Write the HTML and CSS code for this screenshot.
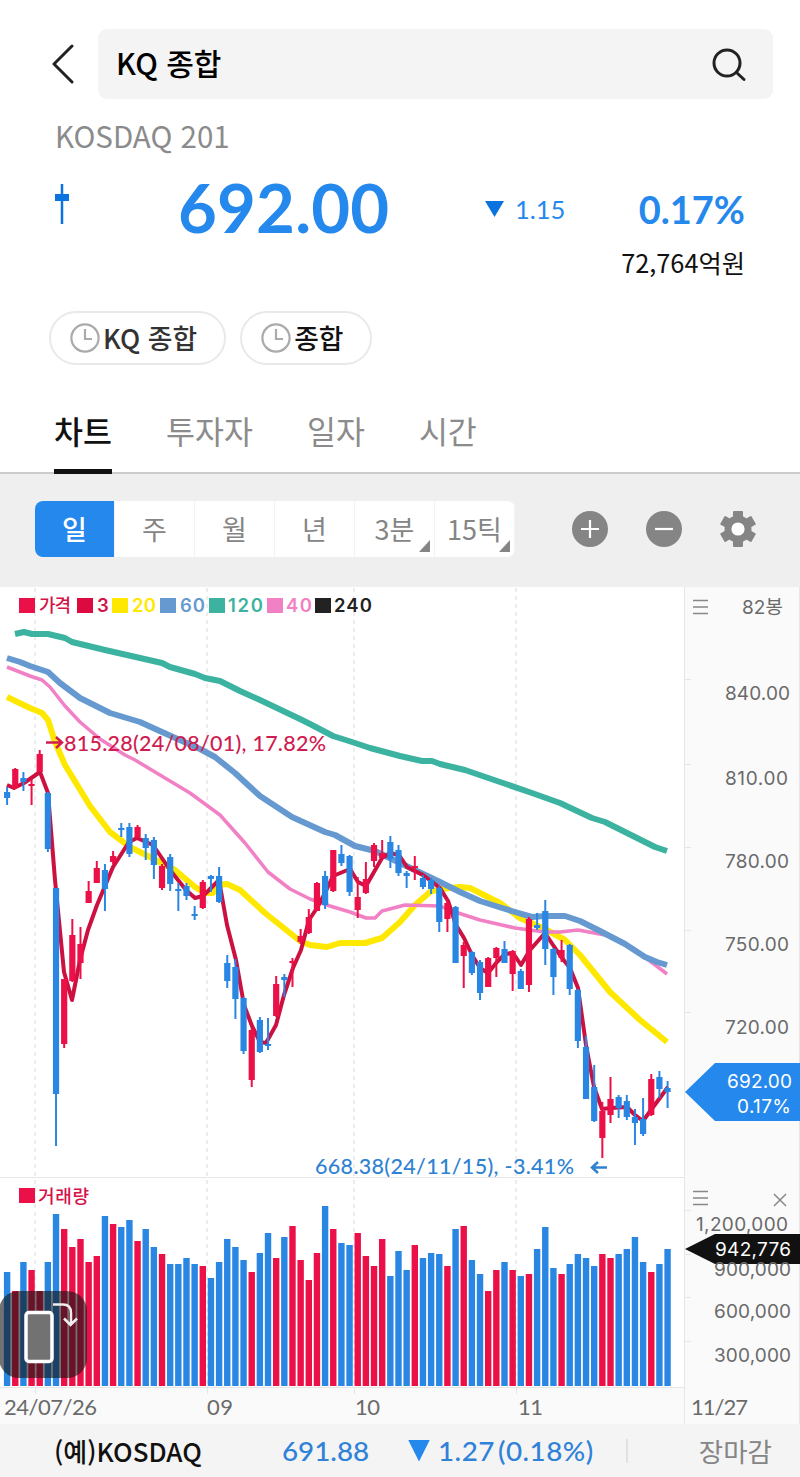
FILE: index.html
```html
<!doctype html>
<html lang="ko">
<head>
    <title>KQ 종합</title>
    <meta charset="utf-8">
    <meta name="viewport" content="width=device-width, initial-scale=1">
    <link rel="stylesheet" href="styles.css">
</head>
<body>
<header class="top-bar">
    <svg class="back" width="24" height="42" viewBox="0 0 24 42"><path d="M22 3 L4 21 L22 39"/></svg>
    <div class="search-box">
        <span>KQ 종합</span>
        <svg width="36" height="36" viewBox="0 0 36 36"><circle cx="16" cy="17" r="13"/><path d="M25.5 26.5 L33 33.500"/></svg>
    </div>
</header>

<section class="quote">
    <div class="code">KOSDAQ 201</div>
    <div class="price-row">
        <svg class="mini-candle" width="14" height="40" viewBox="0 0 14 40"><path d="M7 0V40"/><rect x="0" y="10" width="14" height="7"/></svg>
        <strong class="price">692.00</strong>
        <span class="change"><i class="down"></i>1.15</span>
        <b class="rate">0.17%</b>
    </div>
    <div class="amount">72,764억원</div>
    <div class="chips">
        <div class="chip">
            <svg width="30" height="30" viewBox="0 0 30 30"><circle cx="15" cy="15" r="13.6"/><path d="M15 6V16H22"/></svg>KQ 종합
        </div>
        <div class="chip dark">
            <svg width="30" height="30" viewBox="0 0 30 30"><circle cx="15" cy="15" r="13.6"/><path d="M15 6V16H22"/></svg>종합
        </div>
    </div>
</section>

<nav class="tabs">
    <a class="active">차트</a>
    <a>투자자</a>
    <a>일자</a>
    <a>시간</a>
</nav>

<div class="toolbar">
    <div class="periods">
        <span class="on">일</span>
        <span>주</span>
        <span>월</span>
        <span>년</span>
        <span class="more">3분</span>
        <span class="more">15틱</span>
    </div>
    <div class="tools">
        <svg width="36" height="36" viewBox="0 0 36 36"><circle cx="18" cy="18" r="18"/><path d="M9 18H27M18 9V27"/></svg>
        <svg width="36" height="36" viewBox="0 0 36 36"><circle cx="18" cy="18" r="18"/><path d="M9 18H27"/></svg>
        <svg class="gear" width="36" height="36" viewBox="0 0 36 36">
            <rect x="13" y="0" width="10" height="36" rx="1"/>
            <rect x="13" y="0" width="10" height="36" rx="1" transform="rotate(60 18 18)"/>
            <rect x="13" y="0" width="10" height="36" rx="1" transform="rotate(120 18 18)"/>
            <circle cx="18" cy="18" r="13.5"/>
            <circle class="hole" cx="18" cy="18" r="6.6"/>
        </svg>
    </div>
</div>

<div class="chart">
    <!-- user units are page pixels, so the view starts at the chart's top -->
    <svg width="800" height="837" viewBox="0 587 800 837">
        <rect class="axis-bg" x="684" y="587" width="116" height="837"/>
        <rect class="axis-bg" x="0" y="1387" width="800" height="37"/>
        <path class="dash" d="M35 588V1386M207 588V1386M354 588V1386M516 588V1386"/>
        <path class="rule" d="M0 1177.5H684M0 1387.5H684M684.5 587V1424M799.5 587V1424M35.5 1387v7M207.5 1387v7M354.5 1387v7M516.5 1387v7"/>
        <path class="rule" d="M685 679.5h6M685 764.5h6M685 847.5h6M685 930.5h6M685 1012.5h6M685 1210.5h6M685 1254.5h6M685 1297.5h6M685 1341.5h6"/>

        <g id="lines"></g>
        <g id="candles"></g>
        <g id="volume"></g>

        <g class="legend">
            <rect class="up" x="19" y="598" width="16" height="15"/>
            <text class="kr c-up" x="39" y="612" textLength="32">가격</text>
            <rect class="ma3" x="77" y="598" width="16" height="15"/>
            <text class="c-up" x="97" y="612" textLength="12">3</text>
            <rect class="ma20" x="112" y="598" width="16" height="15"/>
            <text class="ma20" x="132" y="612" textLength="24">20</text>
            <rect class="ma60" x="160" y="598" width="16" height="15"/>
            <text class="ma60" x="180" y="612" textLength="25">60</text>
            <rect class="ma120" x="209" y="598" width="16" height="15"/>
            <text class="ma120" x="228" y="612" textLength="35">120</text>
            <rect class="ma40" x="267" y="598" width="16" height="15"/>
            <text class="ma40" x="286" y="612" textLength="26">40</text>
            <rect x="315" y="598" width="16" height="15" fill="#222"/>
            <text x="334" y="612" textLength="38" fill="#222">240</text>
            <rect class="up" x="19" y="1188" width="16" height="15"/>
            <text class="kr c-up" x="38" y="1203" textLength="51">거래량</text>
        </g>

        <g class="note high">
            <path d="M46 742.500H61M56 737L62 742.500L56 748"/>
            <text x="64" y="751" textLength="262">815.28(24/08/01), 17.82%</text>
        </g>
        <g class="note low">
            <text x="315" y="1174" textLength="259">668.38(24/11/15), -3.41%</text>
            <path d="M607 1167.500H592M598 1162L592 1167.500L598 1173"/>
        </g>

        <path class="icon" d="M693 600.500h15M693 607h15M693 613.500h15M693 1191.500h15M693 1198h15M693 1204.500h15M774 1194l12 12M786 1194l-12 12"/>
        <path d="M685 1092L715 1063H800V1121H715Z" fill="#2588ec"/>
        <path d="M685 1249L715 1234H800V1264H715Z" fill="#111"/>

        <g class="axis">
            <text x="742" y="614" textLength="41">82봉</text>
            <text x="725" y="700" textLength="65">840.00</text>
            <text x="725" y="785" textLength="63">810.00</text>
            <text x="725" y="868" textLength="64">780.00</text>
            <text x="725" y="951" textLength="64">750.00</text>
            <text x="725" y="1034" textLength="64">720.00</text>
            <text class="white" x="727" y="1088" textLength="65">692.00</text>
            <text class="white" x="737" y="1113" textLength="54">0.17%</text>
            <text x="696" y="1231" textLength="92">1,200,000</text>
            <text x="714" y="1276" textLength="77">900,000</text>
            <text class="white" x="715" y="1256" textLength="76">942,776</text>
            <text x="714" y="1318" textLength="77">600,000</text>
            <text x="714" y="1362" textLength="77">300,000</text>
        </g>
        <g class="dates">
            <text x="4" y="1415" textLength="93">24/07/26</text>
            <text x="207" y="1415" textLength="26">09</text>
            <text x="355" y="1415" textLength="25">10</text>
            <text x="518" y="1415" textLength="25">11</text>
            <text x="691" y="1415" textLength="57">11/27</text>
        </g>
    </svg>
    <div class="rotate-btn">
        <svg width="88" height="87" viewBox="0 0 88 87">
            <rect x="27" y="21.500" width="26" height="49" rx="3"/>
            <path d="M54 13.500H64Q72 13.500 72 22V33M65 27.500L71.500 34L78 27.500"/>
        </svg>
    </div>
</div>

<footer class="ticker">
    <span class="name">(예)KOSDAQ</span>
    <span class="num">691.88</span>
    <span class="num diff"><i class="down"></i>1.27<em>(0.18%)</em></span>
    <span class="state">장마감</span>
</footer>
<script src="chart.js"></script>
</body>
</html>
```
FILE: styles.css
```css
* { box-sizing: border-box; }
body {
    margin: 0;
    width: 800px;
    height: 1477px;
    background: #fff;
    color: #111;
    font-family: "Noto Sans CJK KR", sans-serif;
    overflow: hidden;
}
svg { display: block; flex: none; }

.top-bar {
    display: flex;
    align-items: center;
    height: 98px;
    padding: 29px 27px 0 50px;
}
.back { margin-right: 24px; }
.back path, .search-box svg {
    fill: none;
    stroke: #222;
    stroke-width: 3;
    stroke-linecap: round;
    stroke-linejoin: round;
}
.search-box {
    flex: 1;
    display: flex;
    align-items: center;
    justify-content: space-between;
    height: 70px;
    padding: 0 26px 0 18px;
    border-radius: 9px;
    background: #f4f4f4;
    font-size: 30px;
    font-weight: 500;
    line-height: 67px;
    color: #000;
}
.search-box span { height: 70px; }

.quote { height: 302px; padding: 19px 55px 0; }
.code { font-size: 29.500px; line-height: 36px; color: #8b8b8b; }
.price-row {
    display: grid;
    grid-template-columns: 123px 307px 153px 1fr;
    align-items: center;
    height: 88px;
    margin-top: 10px;
    font-family: Lato, sans-serif;
    color: #2588ec;
}
.mini-candle { fill: #0a73e0; stroke: #0a73e0; margin-top: -7px; }
.mini-candle path { stroke-width: 2.5; }
.mini-candle rect { stroke: none; }
.price { font-size: 67px; font-weight: 700; line-height: 88px; letter-spacing: .2px; }
.change { display: flex; align-items: center; font-size: 25.5px; padding-top: 4px; }
.down {
    width: 19px;
    height: 16px;
    margin-right: 11px;
    background: #0a73e0;
    clip-path: polygon(0 0, 100% 0, 50% 100%);
}
.rate { font-size: 38px; text-align: right; padding-top: 4px; }
.amount { font-size: 25.300px; line-height: 30px; text-align: right; margin-top: -4px; }
.chips { display: flex; gap: 14px; margin: 34px 0 0 -6px; }
.chip {
    display: flex;
    align-items: center;
    gap: 3px;
    height: 54px;
    padding: 0 27px 0 19px;
    border: 2px solid #e9e9e9;
    border-radius: 27px;
    font-size: 26.800px;
    font-weight: 500;
    line-height: 48px;
    color: #333;
}
.chip.dark { color: #111; }
.chip svg { fill: none; stroke: #aaa; stroke-width: 2.2; }

.tabs {
    display: flex;
    gap: 54px;
    height: 74px;
    padding-left: 54px;
    border-bottom: 2px solid #ccc;
}
.tabs a {
    height: 74px;
    font-size: 31.500px;
    line-height: 61px;
    color: #8b8b8b;
}
.tabs .active { color: #111; font-weight: 500; border-bottom: 5px solid #111; }

.toolbar {
    display: flex;
    align-items: center;
    height: 113px;
    padding: 0 44px 3px 35px;
    justify-content: space-between;
    background: #efefef;
}
.periods {
    display: flex;
    width: 480px;
    height: 56px;
    border-radius: 8px;
    overflow: hidden;
    background: #fff;
}
.periods span {
    position: relative;
    flex: 1;
    border-right: 1px solid #f3f3f3;
    font-size: 27px;
    line-height: 55px;
    text-align: center;
    color: #858585;
}
.periods .on { background: #2588ec; color: #fff; font-weight: 500; }
.more::after {
    content: "";
    position: absolute;
    right: 4px;
    bottom: 5px;
    border-left: 11px solid transparent;
    border-bottom: 12px solid #858585;
}
.tools { display: flex; gap: 38px; }
.tools svg { fill: #858585; }
.tools path { stroke: #fff; stroke-width: 2.2; }
.tools .hole { fill: #fff; }

.chart { position: relative; height: 837px; }
.axis-bg { fill: #fafafa; }
.dash { stroke: #e2e2e2; stroke-width: 1.2; stroke-dasharray: 4 4; }
.rule { stroke: #e6e6e6; fill: none; }
.up { fill: #ec1048; stroke: #ec1048; }
.dn { fill: #2a86e3; stroke: #2a86e3; }
#volume rect, #candles rect { stroke: none; }
#candles line { stroke-width: 2; }
#lines polyline { fill: none; stroke-linejoin: round; }
.c-up { fill: #d31349; }
.ma3 { fill: #dc0a40; stroke: #cc1040; }
.ma20 { fill: #ffe800; stroke: #ffe800; }
.ma60 { fill: #6599d0; stroke: #6599d0; }
.ma120 { fill: #3cb3a0; stroke: #3cb3a0; }
.ma40 { fill: #f180c4; stroke: #f180c4; }
.legend rect, .legend text { stroke: none; }
.legend text { font: 600 18.500px Inter, sans-serif; }
.legend .kr { font: 500 18px "Noto Sans CJK KR", sans-serif; }
.note text { font: 500 21.500px Lato, sans-serif; }
.note path { fill: none; stroke-width: 2.5; }
.high text { fill: #d01c50; }
.high path { stroke: #d01c50; }
.low text { fill: #2f82d2; }
.low path { stroke: #2f82d2; }
.icon { stroke: #888; stroke-width: 1.5; fill: none; }
.axis text { font: 19px Inter, "Noto Sans CJK KR", sans-serif; fill: #6a6a6a; }
.axis .white { fill: #fff; }
.dates text { font: 22px Lato, sans-serif; fill: #6a6a6a; }

.rotate-btn {
    position: absolute;
    left: -1px;
    top: 704px;
    width: 88px;
    height: 87px;
    border-radius: 20px;
    background: rgba(20, 20, 20, .6);
}
.rotate-btn svg { fill: none; stroke: #fff; stroke-width: 3.5; }
.rotate-btn rect { fill: #727272; }
.rotate-btn path { stroke: #eee; stroke-width: 2.5; }

.ticker {
    display: grid;
    grid-template-columns: 228px 126px 220px 1fr;
    align-items: center;
    height: 53px;
    padding: 0 28px 0 54px;
    background: #f4f4f4;
    font-size: 26px;
    line-height: 53px;
}
.ticker .name { font-weight: 500; }
.ticker .num { font: 500 27.800px Lato, sans-serif; color: #2f82d8; }
.ticker .diff {
    display: flex;
    align-items: center;
    height: 24px;
    border-right: 2px solid #e2e2e2;
    letter-spacing: .5px;
}
.ticker em { font-style: normal; margin-left: 3px; }
.ticker .down { width: 22px; height: 22px; margin-right: 8px; background: #2588ec; }
.state { text-align: right; font-size: 26.500px; color: #858585; }
```
FILE: chart.js
```js
// color, high, body top, body bottom, low (chart y), volume bar top
const bars = [
    ['b',787,792,798,805,1272],['r',768,769,788,789,1291],['b',772,778,782,791,1262],['r',779,784,786,805,1270],
    ['r',750,754,772,772,1291],['b',792,793,849,852,1262],['b',888,888,1094,1146,1214],['r',979,979,1044,1048,1229],
    ['r',919,935,981,982,1247],['r',927,944,963,979,1239],['r',881,891,903,903,1262],['r',861,868,883,883,1256],
    ['b',864,870,889,911,1216],['r',851,856,862,864,1224],['b',823,828,830,837,1227],['b',823,827,854,857,1220],
    ['r',825,827,837,838,1241],['b',834,838,848,860,1229],['b',837,840,865,879,1247],['r',864,866,888,890,1254],
    ['b',854,857,884,891,1264],['b',883,889,891,911,1264],['b',883,886,896,900,1258],['b',906,914,916,920,1264],
    ['r',880,882,908,909,1266],['b',875,876,879,892,1278],['b',867,876,902,903,1262],['b',955,963,981,988,1239],
    ['b',959,967,999,1019,1247],['b',997,998,1051,1054,1260],['r',1028,1030,1080,1087,1272],['b',1017,1020,1052,1053,1253],
    ['b',1018,1044,1046,1050,1233],['r',976,984,1016,1017,1258],['b',974,977,980,997,1237],['r',958,961,963,987,1226],
    ['r',929,936,942,944,1260],['r',909,917,933,934,1280],['r',882,883,911,911,1253],['b',871,876,905,909,1206],
    ['r',850,850,891,892,1229],['b',845,854,863,866,1243],['b',855,856,892,896,1245],['r',877,897,910,918,1233],
    ['r',862,879,893,894,1256],['r',843,845,861,867,1266],['r',840,853,858,858,1239],['b',836,842,859,868,1276],
    ['b',845,850,873,876,1251],['b',871,873,876,888,1270],['r',856,866,868,880,1245],['b',875,878,887,889,1258],
    ['b',878,880,889,894,1253],['b',886,888,922,932,1254],['r',899,903,919,932,1266],['b',906,907,963,963,1229],
    ['r',942,945,956,988,1226],['b',951,952,973,975,1260],['b',960,962,993,1000,1274],['r',957,958,987,987,1291],
    ['r',947,948,958,977,1270],['b',941,949,963,963,1262],['r',950,951,974,991,1270],['b',969,971,989,989,1276],
    ['r',917,919,985,992,1274],['b',913,925,928,930,1249],['b',900,911,949,965,1227],['b',948,949,977,995,1268],
    ['r',940,950,958,962,1274],['b',944,945,989,995,1264],['b',989,990,1041,1048,1254],['b',1036,1047,1099,1099,1258],
    ['b',1065,1087,1121,1122,1266],['r',1102,1111,1138,1158,1254],['r',1077,1099,1115,1123,1258],['b',1095,1097,1108,1118,1254],
    ['b',1095,1101,1117,1120,1249],['b',1109,1117,1123,1145,1237],['b',1098,1119,1134,1136,1262],['r',1074,1079,1115,1116,1272],
    ['b',1071,1077,1089,1098,1264],['b',1081,1088,1092,1108,1249]
];

const averages = [
    ['ma120', 6, '15,634 24,632 32,634 48,634 65,638 72,642 105,650 162,663 170,667 195,674 205,678 220,681 240,691 260,700 300,719 310,724 333,736 352,742 370,748 400,756 422,761 432,761 440,764 465,770 500,782 532,793 560,803 592,818 605,822 655,847 667,851'],
    ['ma20', 6, '7,697 30,708 42,713 48,720 55,742 65,765 90,806 110,832 130,847 150,857 175,870 195,887 205,893 213,893 218,885 227,884 240,890 265,913 300,941 310,945 327,947 340,943 365,943 382,938 400,922 415,905 430,892 440,889 460,887 470,888 500,903 520,918 545,929 565,940 580,955 610,992 640,1020 667,1042'],
    ['ma40', 3.5, '7,667 30,676 42,680 50,687 65,706 80,722 100,739 125,755 135,760 160,775 190,793 220,815 245,843 268,872 290,889 310,899 330,906 350,912 366,918 375,918 382,911 405,905 440,906 452,911 480,920 515,928 545,932 560,932 578,930 605,935 630,947 650,961 667,974'],
    ['ma60', 6, '7,658 20,662 30,666 48,672 60,683 80,698 110,713 140,722 162,732 200,749 215,757 235,773 260,796 292,817 325,832 335,835 355,846 375,851 400,863 440,882 460,892 480,901 502,908 515,912 532,917 545,916 565,916 580,921 600,931 625,944 645,957 657,962 667,965'],
    ['ma3', 4, '7,785 14,788 24,783 40,772 48,793 55,880 64,972 72,1000 80,960 88,930 97,905 113,867 129,842 137,838 153,845 170,870 186,890 195,898 203,896 219,880 227,925 236,960 244,1005 252,1026 260,1042 266,1043 276,1025 284,995 293,968 301,950 309,920 317,908 325,893 333,876 350,869 358,882 366,886 374,872 382,858 390,853 399,855 407,867 423,875 440,888 448,901 456,925 464,938 472,955 480,968 488,973 497,962 505,954 513,953 521,965 530,950 545,933 553,945 562,958 570,968 578,988 586,1045 594,1087 602,1109 611,1108 627,1107 635,1115 643,1121 651,1110 668,1087']
];

const step = 8.154;
let candles = '';
let volume = '';

bars.forEach(([color, high, top, bottom, low, vol], i) => {
    const x = 7.1 + i * step;
    const cls = color === 'r' ? 'up' : 'dn';
    candles += `<g class="${cls}"><line x1="${x}" x2="${x}" y1="${high}" y2="${low}"/>` +
        `<rect x="${x - 3.1}" y="${top}" width="6.2" height="${bottom - top}"/></g>`;
    volume += `<rect class="${cls}" x="${x - 3.2}" y="${vol}" width="6.4" height="${1386 - vol}"/>`;
});

document.getElementById('candles').innerHTML = candles;
document.getElementById('volume').innerHTML = volume;
document.getElementById('lines').innerHTML = averages.map(([cls, width, points]) =>
    `<polyline class="${cls}" stroke-width="${width}" points="${points}"/>`).join('');
```
